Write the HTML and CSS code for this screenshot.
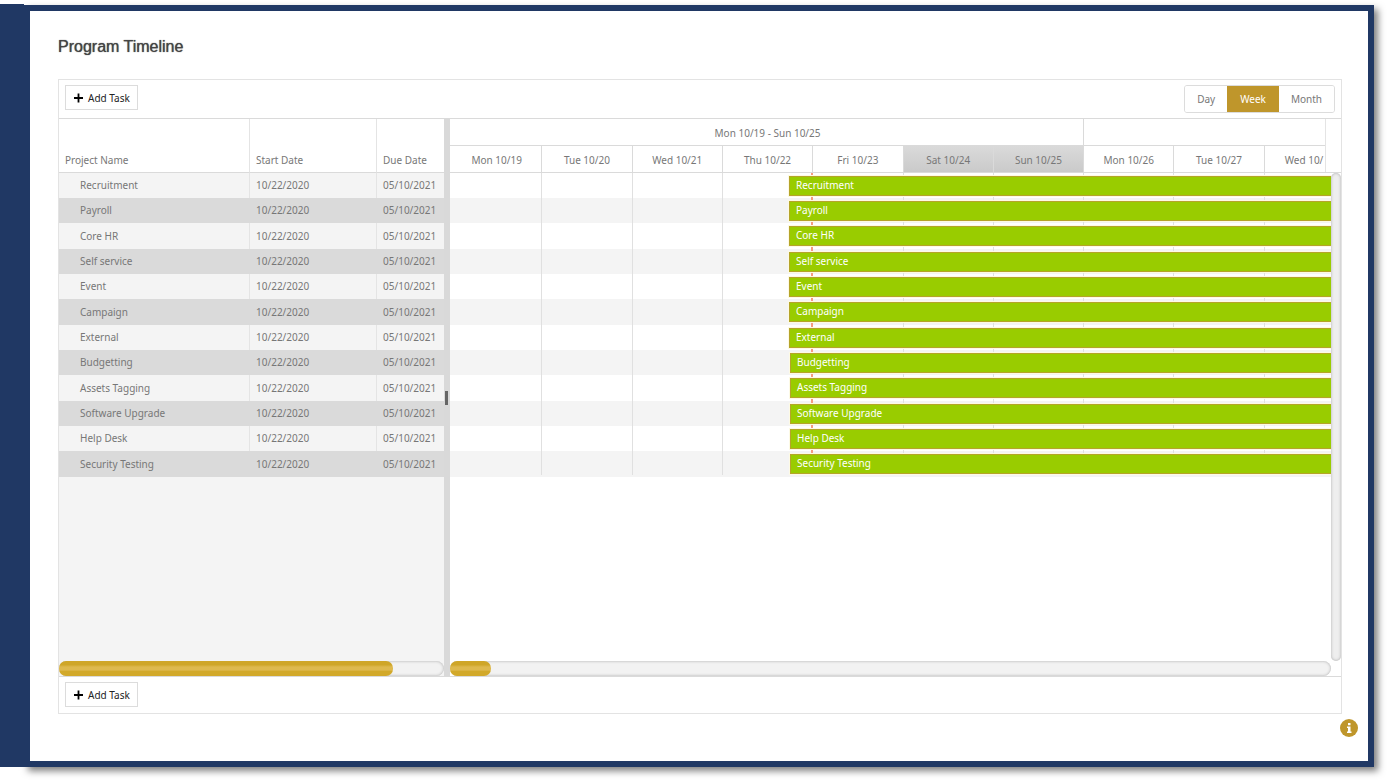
FILE: index.html
```html
<!DOCTYPE html>
<html lang="en">
<head>
<meta charset="utf-8">
<title>Program Timeline</title>
<link rel="stylesheet" href="styles.css">
</head>
<body>
<div class="app">
  <div class="side-band"></div>
  <main class="frame">
    <h1 class="title">Program Timeline</h1>
    <section class="gantt">
      <div class="toolbar">
        <button class="add" type="button"><svg class="plus" viewBox="0 0 10 10" aria-hidden="true"><path d="M5 0v10M0 5h10"/></svg>Add Task</button>
        <div class="views">
          <button type="button">Day</button>
          <button type="button" class="active">Week</button>
          <button type="button">Month</button>
        </div>
      </div>
      <div class="panes">
        <div class="list">
          <table class="tasks">
            <thead><tr><th class="c-name">Project Name</th><th class="c-start">Start Date</th><th class="c-due">Due Date</th></tr></thead>
            <tbody>
              <tr><td>Recruitment</td><td>10/22/2020</td><td>05/10/2021</td></tr>
              <tr><td>Payroll</td><td>10/22/2020</td><td>05/10/2021</td></tr>
              <tr><td>Core HR</td><td>10/22/2020</td><td>05/10/2021</td></tr>
              <tr><td>Self service</td><td>10/22/2020</td><td>05/10/2021</td></tr>
              <tr><td>Event</td><td>10/22/2020</td><td>05/10/2021</td></tr>
              <tr><td>Campaign</td><td>10/22/2020</td><td>05/10/2021</td></tr>
              <tr><td>External</td><td>10/22/2020</td><td>05/10/2021</td></tr>
              <tr><td>Budgetting</td><td>10/22/2020</td><td>05/10/2021</td></tr>
              <tr><td>Assets Tagging</td><td>10/22/2020</td><td>05/10/2021</td></tr>
              <tr><td>Software Upgrade</td><td>10/22/2020</td><td>05/10/2021</td></tr>
              <tr><td>Help Desk</td><td>10/22/2020</td><td>05/10/2021</td></tr>
              <tr><td>Security Testing</td><td>10/22/2020</td><td>05/10/2021</td></tr>
            </tbody>
          </table>
          <div class="hscroll"><div class="thumb thumb-list"></div></div>
        </div>
        <div class="splitter"><span class="grip"></span></div>
        <div class="timeline">
          <div class="scale">
            <div class="scale-clip">
              <div class="weeks"><span>Mon 10/19 - Sun 10/25</span><span></span></div>
              <div class="days">
                <span>Mon 10/19</span><span>Tue 10/20</span><span>Wed 10/21</span><span>Thu 10/22</span><span>Fri 10/23</span><span class="off">Sat 10/24</span><span class="off">Sun 10/25</span><span>Mon 10/26</span><span>Tue 10/27</span><span class="partial">Wed 10/</span>
              </div>
            </div>
          </div>
          <div class="chart">
            <div class="plot">
              <div class="rows">
                <div class="row"><div class="bar">Recruitment</div></div>
                <div class="row"><div class="bar">Payroll</div></div>
                <div class="row"><div class="bar">Core HR</div></div>
                <div class="row"><div class="bar">Self service</div></div>
                <div class="row"><div class="bar">Event</div></div>
                <div class="row"><div class="bar">Campaign</div></div>
                <div class="row"><div class="bar">External</div></div>
                <div class="row"><div class="bar late">Budgetting</div></div>
                <div class="row"><div class="bar late">Assets Tagging</div></div>
                <div class="row"><div class="bar late">Software Upgrade</div></div>
                <div class="row"><div class="bar late">Help Desk</div></div>
                <div class="row"><div class="bar late">Security Testing</div></div>
                <div class="lines"><i></i><i></i><i></i><i class="now"></i><i></i><i></i><i></i><i></i><i></i><i></i></div>
              </div>
            </div>
            <div class="vscroll"></div>
          </div>
          <div class="hscroll hscroll-chart"><div class="thumb thumb-chart"></div></div>
        </div>
      </div>
      <div class="footer">
        <button class="add" type="button"><svg class="plus" viewBox="0 0 10 10" aria-hidden="true"><path d="M5 0v10M0 5h10"/></svg>Add Task</button>
      </div>
    </section>
    <button class="info" type="button" aria-label="Information"><svg viewBox="0 0 18 18" aria-hidden="true"><circle cx="9" cy="9" r="9" fill="#bf962b"/><path fill="#fff" d="M8 4h2.500v2.200H8zM7 7.500h3.500v5h1V14H7v-1.500h1V9H7z"/></svg></button>
  </main>
</div>
</body>
</html>
```
FILE: styles.css
```css
* { box-sizing: border-box; }

body {
  margin: 0;
  background: #fff;
  color: #777;
  font: 10px/14px "Noto Sans", "Open Sans", sans-serif;
}

button { font: inherit; cursor: pointer; }

.app { display: flex; min-height: 100vh; padding: 4px 13px 13px 0; }

/* Stacked over the frame so that its shadow does not fall on the band. */
.side-band { position: relative; z-index: 1; flex: 0 0 24px; background: #203864; }

.frame {
  flex: 1;
  min-width: 0;
  display: flex;
  flex-direction: column;
  margin-top: 1px;
  padding: 26px 10px 24px 28px;
  border: 6px solid #203864;
  background: #fff;
  box-shadow: 4px 4px 7px rgba(0, 0, 0, .5);
}

.title {
  margin: 0 0 22px;
  color: #444;
  font: 400 16px/20px "Liberation Sans", Arial, sans-serif;
  text-shadow: 0 0 1px #444;
}

.gantt {
  flex: 1;
  display: flex;
  flex-direction: column;
  margin-right: 16px;
  border: 1px solid #e3e3e3;
}

.toolbar {
  display: flex;
  justify-content: space-between;
  align-items: flex-start;
  height: 39px;
  padding: 5px 6px;
  border-bottom: 1px solid #dadada;
}

.add {
  display: flex;
  align-items: center;
  gap: 5px;
  height: 25px;
  padding: 0 7px 0 8px;
  border: 1px solid #dcdcdc;
  background: #fff;
  color: #222;
}

.plus { width: 9px; height: 10px; fill: none; stroke: #000; stroke-width: 2; }

.views { display: flex; border: 1px solid #dcdcdc; border-radius: 3px; overflow: hidden; }

.views button {
  height: 26px;
  padding: 0 12px;
  border: 0;
  background: #fff;
  color: #777;
}

.views .active { padding: 0 13px; background: #bf962b; color: #fff; }

.panes { flex: 1; display: flex; min-height: 0; }

.list {
  flex: 0 0 385px;
  display: flex;
  flex-direction: column;
  justify-content: space-between;
  background: #f4f4f4;
}

.tasks { width: 100%; border-collapse: separate; border-spacing: 0; table-layout: fixed; }

.tasks th {
  height: 54px;
  padding: 0 6px 5px;
  border-right: 1px solid #e4e4e4;
  border-bottom: 1px solid #dadada;
  background: #fff;
  font-weight: 400;
  text-align: left;
  vertical-align: bottom;
}

.tasks .c-name { width: 191px; }
.tasks .c-start { width: 127px; }
.tasks th:last-child, .tasks td:last-child { border-right: 0; }

.tasks td { height: 25px; padding: 0 6px 1px; border-right: 1px solid #e4e4e4; white-space: nowrap; }
.tasks td:first-child { padding-left: 21px; }
.tasks tr:nth-child(3n) td { height: 26px; }
.tasks tr:nth-child(even) td { background: #dadada; border-color: #dadada; }

.splitter {
  flex: 0 0 6px;
  display: flex;
  align-items: center;
  background: #d9d9d9;
}

.grip { width: 3px; height: 14px; margin-left: 1px; background: #666; }

.timeline { flex: 1; min-width: 0; display: flex; flex-direction: column; }

.scale { height: 54px; padding-right: 15px; border-bottom: 1px solid #dadada; }
.scale-clip { overflow: hidden; border-right: 1px solid #e4e4e4; }

.weeks, .days, .lines { display: grid; width: 905px; padding-left: 2px; }
.weeks { grid-template-columns: 7fr 3fr; border-bottom: 1px solid #dadada; }
.days, .lines { grid-template-columns: repeat(10, 1fr); }

.weeks span, .days span {
  height: 26px;
  border-right: 1px solid #dadada;
  line-height: 28px;
  text-align: center;
}

.days .off { background: linear-gradient(#dadada, #cacaca); }
.days .partial { padding-left: 20px; text-align: left; }

.chart { flex: 1; display: flex; }
.plot { flex: 1; min-width: 0; overflow: hidden; }
.rows { position: relative; }

.row { height: 25px; padding-top: 3px; }
.row:nth-child(3n) { height: 26px; }
.row:nth-child(even) { background: #f4f4f4; }

/* Task bars sit above the day lines of the plot. */
.bar {
  position: relative;
  z-index: 1;
  height: 20px;
  margin-left: 339px;
  padding-left: 6px;
  border: 1px solid #b5a42a;
  border-right: 0;
  background: #9c0;
  box-shadow: 0 0 0 1px #fdfae4;
  color: #fff;
  line-height: 17px;
}

.late { margin-left: 340px; }

.lines { position: absolute; top: 0; bottom: 2px; left: 0; }
.lines i { border-right: 1px solid #e0e0e0; }
.lines .now { border-right: 2px solid #f59a80; }

.vscroll {
  width: 10px;
  border-radius: 5px;
  background: #eee;
  box-shadow: inset 0 0 3px #aaa;
}

.hscroll {
  height: 15px;
  border-radius: 8px;
  background: #f2f2f2;
  box-shadow: inset 0 0 3px #aaa;
}

.hscroll-chart { margin-right: 10px; }

.thumb {
  height: 15px;
  border-radius: 7px;
  background: linear-gradient(#cfa628 0 25%, #deb94e 40% 60%, #d2a92a 70%);
}

.thumb-list { width: 334px; }
.thumb-chart { width: 41px; }

.footer { height: 37px; padding: 5px 6px; border-top: 1px solid #dadada; }

.info {
  align-self: flex-end;
  width: 18px;
  height: 18px;
  margin-top: 5px;
  padding: 0;
  border: 0;
  background: none;
}

.info svg { display: block; width: 18px; height: 18px; }
```
